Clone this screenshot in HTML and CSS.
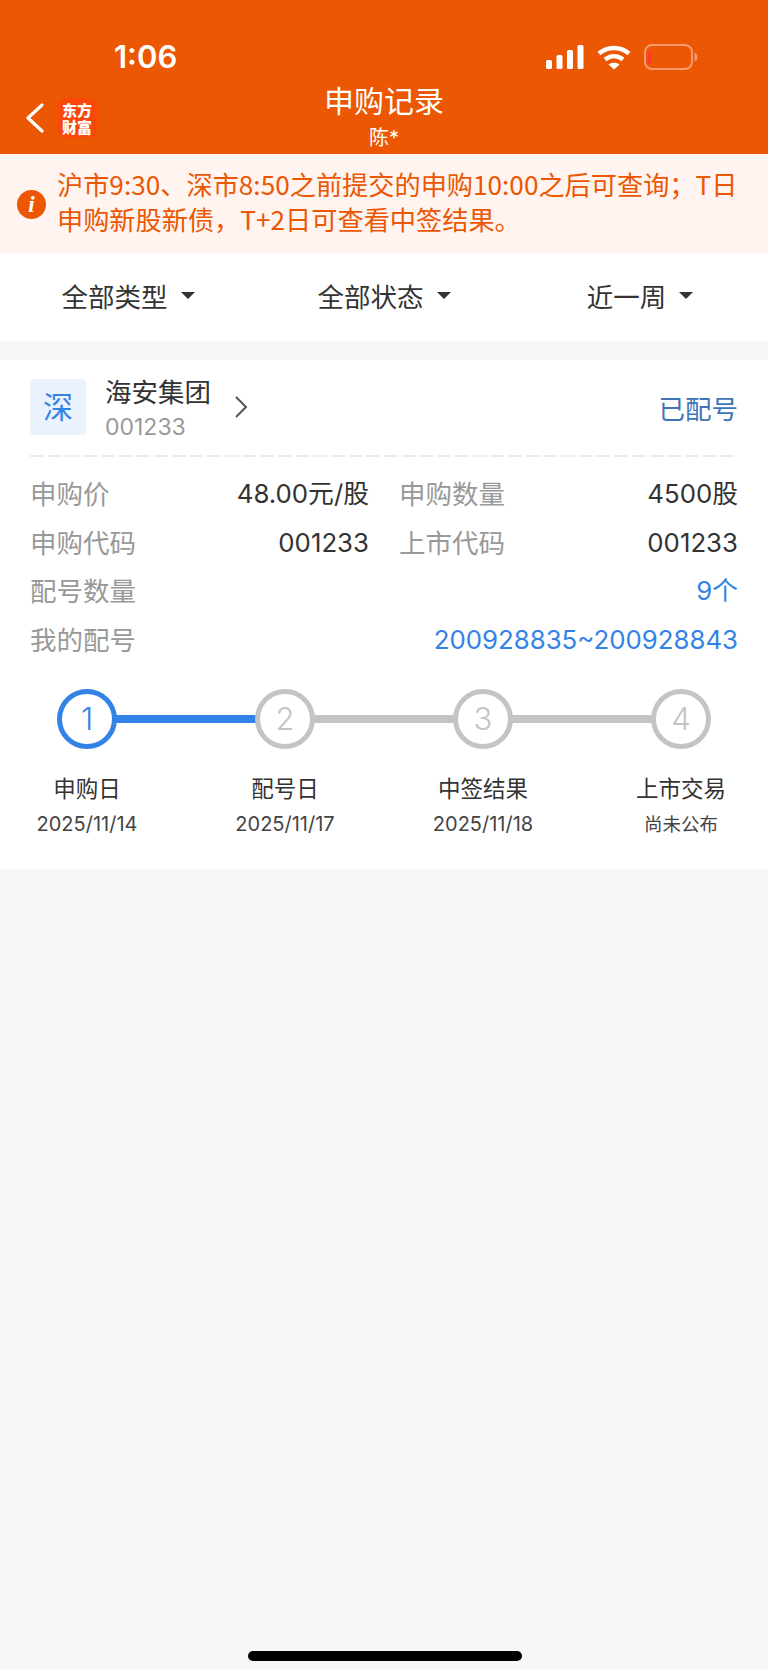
FILE: index.html
```html
<!DOCTYPE html>
<html lang="zh-CN">
<head>
  <meta charset="UTF-8">
  <meta name="viewport" content="width=device-width, initial-scale=1.0">
  <title>申购记录</title>
  <link rel="stylesheet" href="styles.css">
</head>
<body>

  <header class="top">
    <div class="status-bar">
      <span class="time">1:06</span>
      <div class="status-icons">
        <svg width="38" height="24" viewBox="0 0 38 24" fill="#fff">
          <rect x="0" y="15" width="6" height="9" rx="1.5"/>
          <rect x="10.500" y="10" width="6" height="14" rx="1.5"/>
          <rect x="21" y="5" width="6" height="19" rx="1.5"/>
          <rect x="31.500" y="0" width="6" height="24" rx="1.5"/>
        </svg>
        <svg class="wifi" width="34" height="25" viewBox="0 0 34 25" fill="none" stroke="#fff" stroke-width="4.500">
          <path d="M2 8.500C10.500 1 23.500 1 32 8.500"/>
          <path d="M8 14.500C13.500 10 20.500 10 26 14.500"/>
          <path d="M17 24.500L11.500 19.500C14.500 17 19.500 17 22.500 19.500Z" fill="#fff" stroke="none"/>
        </svg>
        <svg class="battery" width="54" height="26" viewBox="0 0 54 26" fill="none">
          <rect x="1" y="1" width="47" height="24" rx="7" stroke="#f79a6e" stroke-width="2"/>
          <rect x="4" y="7" width="3" height="13" fill="#ff3b30"/>
          <path d="M50.500 8.500C52.500 9.500 53.500 11 53.500 13C53.500 15 52.500 16.500 50.500 17.500Z" fill="#f79a6e"/>
        </svg>
      </div>
    </div>
    <div class="nav">
      <div class="nav-left">
        <svg width="18" height="30" viewBox="0 0 18 30" fill="none" stroke="#fff" stroke-width="3.200" stroke-linecap="round" stroke-linejoin="round">
          <path d="M16 2L2 15L16 28"/>
        </svg>
        <div class="logo"><div class="logo-text">东方财富</div></div>
      </div>
      <div class="nav-title">
        <div class="title">申购记录</div>
        <div class="subtitle">陈*</div>
      </div>
    </div>
  </header>

  <div class="notice">
    <div class="notice-icon">i</div>
    <p>沪市9:30、深市8:50之前提交的申购10:00之后可查询；T日申购新股新债，T+2日可查看中签结果。</p>
  </div>

  <div class="filters">
    <div class="filter">全部类型<i class="caret"></i></div>
    <div class="filter">全部状态<i class="caret"></i></div>
    <div class="filter">近一周<i class="caret"></i></div>
  </div>

  <div class="card">
    <div class="card-head">
      <div class="market">深</div>
      <div class="stock">
        <div class="stock-name">海安集团</div>
        <div class="stock-code">001233</div>
      </div>
      <svg class="arrow" width="14" height="24" viewBox="0 0 14 24" fill="none" stroke="#555" stroke-width="2">
        <path d="M2 2L12 12L2 22"/>
      </svg>
      <div class="state">已配号</div>
    </div>

    <div class="rows">
      <div class="row">
        <div class="cell"><span class="label">申购价</span><span class="value">48.00元/股</span></div>
        <div class="cell"><span class="label">申购数量</span><span class="value">4500股</span></div>
      </div>
      <div class="row">
        <div class="cell"><span class="label">申购代码</span><span class="value">001233</span></div>
        <div class="cell"><span class="label">上市代码</span><span class="value">001233</span></div>
      </div>
      <div class="row">
        <div class="cell"><span class="label">配号数量</span><span class="value blue">9个</span></div>
      </div>
      <div class="row">
        <div class="cell"><span class="label">我的配号</span><span class="value blue">200928835~200928843</span></div>
      </div>
    </div>

    <div class="steps">
      <div class="step active">
        <div class="dot">1</div>
        <div class="step-name">申购日</div>
        <div class="step-date">2025/11/14</div>
      </div>
      <div class="step">
        <div class="dot">2</div>
        <div class="step-name">配号日</div>
        <div class="step-date">2025/11/17</div>
      </div>
      <div class="step">
        <div class="dot">3</div>
        <div class="step-name">中签结果</div>
        <div class="step-date">2025/11/18</div>
      </div>
      <div class="step last">
        <div class="dot">4</div>
        <div class="step-name">上市交易</div>
        <div class="step-date step-cjk">尚未公布</div>
      </div>
    </div>
  </div>

  <div class="home-bar"></div>

</body>
</html>
```

FILE: styles.css
```css
* {
  box-sizing: border-box;
}
body {
  margin: 0;
  height: 1669px;
  overflow: hidden;
  position: relative;
  background-color: #f6f7f9;
  color: #333;
  font-family: Inter, "Noto Sans CJK SC", sans-serif;
}
.top {
  background-color: #eb5703;
  color: white;
  height: 154px;
}
.status-bar {
  height: 80px;
  padding: 37px 70px 0 114px;
  display: flex;
  justify-content: space-between;
  align-items: flex-start;
}
.time {
  font-size: 31px;
  line-height: 40px;
  font-weight: 600;
}
.status-icons {
  display: flex;
  align-items: center;
  gap: 13px;
  padding-top: 7px;
}
.nav {
  display: flex;
  position: relative;
  height: 74px;
}
.nav-left {
  display: flex;
  align-items: center;
  gap: 13px;
  padding: 15px 0 0 26px;
  height: 60px;
}
.logo {
  width: 40px;
  height: 40px;
  border-radius: 9px;
  background-color: #f9480a;
  display: flex;
  align-items: center;
  justify-content: center;
}
.logo-text {
  width: 30px;
  color: white;
  font-family: "Noto Sans CJK SC", sans-serif;
  font-size: 15px;
  line-height: 17px;
  font-weight: 900;
  text-align: center;
}
.nav-title {
  position: absolute;
  left: 0;
  right: 0;
  top: 1px;
  text-align: center;
}
.title {
  font-size: 30px;
  line-height: 40px;
}
.subtitle {
  font-size: 20px;
  line-height: 28px;
  margin-top: 3px;
}
.notice {
  height: 100px;
  background-color: #fff4f0;
  color: #eb5703;
  display: flex;
  align-items: center;
  padding: 0 18px 0 17px;
  gap: 11px;
}
.notice p {
  margin: 0;
  padding-bottom: 5px;
  font-family: "Noto Sans CJK SC", sans-serif;
  font-size: 26.200px;
  line-height: 34.500px;
  flex: 1;
}
.notice-icon {
  width: 29px;
  height: 29px;
  flex: none;
  border-radius: 50%;
  background-color: #eb5703;
  color: white;
  font-family: "Liberation Serif", serif;
  font-style: italic;
  font-weight: bold;
  font-size: 23px;
  line-height: 29px;
  text-align: center;
}
.filters {
  height: 87px;
  background-color: white;
  display: flex;
  margin-bottom: 19px;
}
.filter {
  flex: 1;
  display: flex;
  align-items: center;
  justify-content: center;
  font-size: 26.500px;
  gap: 13px;
  padding-bottom: 4px;
}
.caret {
  width: 0;
  height: 0;
  border-left: 7px solid transparent;
  border-right: 7px solid transparent;
  border-top: 7px solid #333;
}
.card {
  background-color: white;
  height: 509px;
  padding: 0 30px;
}
.card-head {
  display: flex;
  align-items: center;
  height: 97px;
  padding: 2px 0 6px;
  background-image: repeating-linear-gradient(90deg, #ececec 0, #ececec 14px, transparent 14px, transparent 17.700px);
  background-size: 100% 2px;
  background-position: bottom;
  background-repeat: no-repeat;
}
.market {
  width: 56px;
  height: 56px;
  border-radius: 4px;
  background-color: #e9f2fd;
  color: #3382e5;
  font-size: 30px;
  line-height: 56px;
  text-align: center;
  flex: none;
}
.stock {
  margin-left: 19px;
}
.stock-name {
  font-size: 26.500px;
  line-height: 36px;
  margin-top: 2px;
}
.stock-code {
  font-size: 23px;
  line-height: 30px;
  color: #999;
  margin-top: 2px;
}
.arrow {
  margin-left: 23px;
}
.state {
  margin-left: auto;
  font-size: 26.500px;
  color: #3f74b8;
  padding-top: 2px;
}
.rows {
  padding-top: 13px;
}
.row {
  display: flex;
  gap: 30px;
  height: 48.500px;
  align-items: center;
}
.cell {
  flex: 1;
  display: flex;
  justify-content: space-between;
  align-items: center;
  font-size: 26.500px;
  line-height: 36px;
}
.label {
  color: #999;
}
.value {
  color: #333;
  font-size: 25.800px;
}
.value.blue {
  color: #3382e5;
}
.steps {
  display: flex;
  padding-top: 25px;
  margin: 0 -30px;
}
.step {
  position: relative;
  flex: none;
  width: 198px;
  display: flex;
  flex-direction: column;
  align-items: center;
}
.step:first-child {
  margin-left: -12px;
}
.step::after {
  content: "";
  position: absolute;
  left: 50%;
  width: 100%;
  top: 26px;
  height: 8px;
  background-color: #c4c4c4;
}
.step.active::after {
  background-color: #3382e5;
}
.step.last::after {
  display: none;
}
.dot {
  position: relative;
  z-index: 1;
  width: 60px;
  height: 60px;
  border-radius: 50%;
  border: 5.500px solid #c4c4c4;
  background-color: white;
  color: #c4c4c4;
  font-size: 31px;
  font-weight: 300;
  line-height: 49px;
  text-align: center;
}
.step.active .dot {
  border-color: #3382e5;
  color: #3382e5;
}
.step-name {
  font-size: 22.500px;
  line-height: 32px;
  margin-top: 24px;
}
.step-date {
  font-size: 20px;
  line-height: 28px;
  margin-top: 5px;
  color: #444;
}
.step-cjk {
  font-size: 18.500px;
}
.home-bar {
  position: absolute;
  left: 248px;
  bottom: 8px;
  width: 274px;
  height: 10px;
  border-radius: 5px;
  background-color: #000;
}
```
